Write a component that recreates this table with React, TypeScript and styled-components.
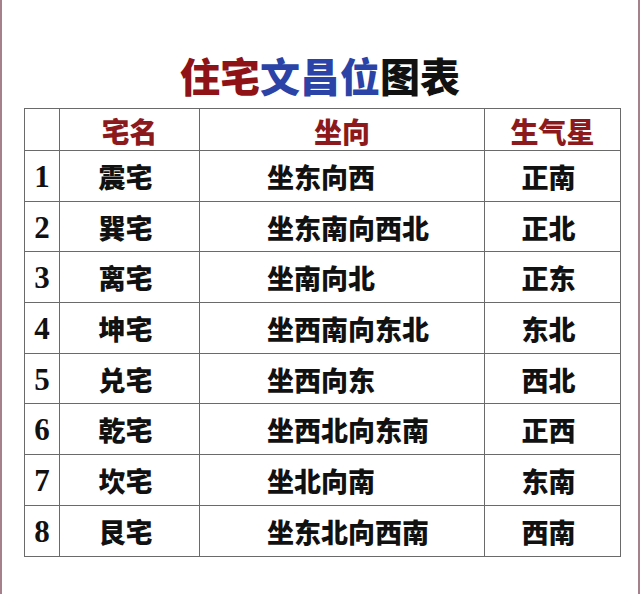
import React from 'react';
import styled, { createGlobalStyle } from 'styled-components';

interface House {
  nummer: number;
  namn: string;
  riktning: string;
  stjarna: string;
}

const houses: House[] = [
  { nummer: 1, namn: '震宅', riktning: '坐东向西', stjarna: '正南' },
  { nummer: 2, namn: '巽宅', riktning: '坐东南向西北', stjarna: '正北' },
  { nummer: 3, namn: '离宅', riktning: '坐南向北', stjarna: '正东' },
  { nummer: 4, namn: '坤宅', riktning: '坐西南向东北', stjarna: '东北' },
  { nummer: 5, namn: '兑宅', riktning: '坐西向东', stjarna: '西北' },
  { nummer: 6, namn: '乾宅', riktning: '坐西北向东南', stjarna: '正西' },
  { nummer: 7, namn: '坎宅', riktning: '坐北向南', stjarna: '东南' },
  { nummer: 8, namn: '艮宅', riktning: '坐东北向西南', stjarna: '西南' },
];

const App: React.FC = () => {
  return (
    <>
      <GlobalStyle />
      <StyledPage>
        <StyledTitle>
          <StyledTitlePart $color="#8e1216">住宅</StyledTitlePart>
          <StyledTitlePart $color="#2b43a6">文昌位</StyledTitlePart>
          <StyledTitlePart $color="#111">图表</StyledTitlePart>
        </StyledTitle>
        <StyledTable>
          <colgroup>
            <col style={{ width: 35 }} />
            <col style={{ width: 140 }} />
            <col style={{ width: 285 }} />
            <col style={{ width: 136 }} />
          </colgroup>
          <thead>
            <tr>
              <StyledHeadCell />
              <StyledHeadCell>宅名</StyledHeadCell>
              <StyledHeadCell>坐向</StyledHeadCell>
              <StyledHeadCell>生气星</StyledHeadCell>
            </tr>
          </thead>
          <tbody>
            {houses.map((house) => (
              <StyledRow key={house.nummer}>
                <StyledNumberCell>{house.nummer}</StyledNumberCell>
                <StyledCell>{house.namn}</StyledCell>
                <StyledCell $left>{house.riktning}</StyledCell>
                <StyledCell>{house.stjarna}</StyledCell>
              </StyledRow>
            ))}
          </tbody>
        </StyledTable>
      </StyledPage>
    </>
  );
};

export default App;

const GlobalStyle = createGlobalStyle`
  html, body {
    margin: 0;
    padding: 0;
    background: #fff;
  }
`;

const StyledPage = styled.div`
  box-sizing: border-box;
  width: 640px;
  height: 594px;
  padding-top: 55px;
  border-left: 2px solid #a4818b;
  border-right: 2px solid #a4818b;
  background: #fff;
`;

const StyledTitle = styled.h1`
  margin: 0 0 13px;
  text-align: center;
  font-family: 'Noto Sans CJK SC', sans-serif;
  font-size: 40px;
  line-height: 40px;
  font-weight: 900;
  letter-spacing: 0;
`;

const StyledTitlePart = styled.span<{ $color: string }>`
  color: ${(p) => p.$color};
`;

const StyledTable = styled.table`
  margin-left: 22px;
  width: 596px;
  border-collapse: collapse;
  table-layout: fixed;
  font-family: 'Noto Sans CJK SC', sans-serif;
  font-weight: 900;
`;

const StyledHeadCell = styled.th`
  height: 39px;
  padding: 2px 0 0;
  border: 1px solid #6a6a6a;
  color: #8c1a1c;
  font-size: 28px;
  line-height: 1;
  font-weight: 900;
  text-align: center;
  vertical-align: middle;
`;

const StyledRow = styled.tr`
  height: 50.7px;
`;

const StyledCell = styled.td<{ $left?: boolean }>`
  padding: 1px ${(p) => (p.$left ? '0 0 67px' : '8px 0 0')};
  border: 1px solid #6a6a6a;
  color: #111;
  font-size: 27px;
  line-height: 1;
  text-align: ${(p) => (p.$left ? 'left' : 'center')};
  vertical-align: middle;
  white-space: nowrap;
`;

const StyledNumberCell = styled.td`
  padding: 1px 0 0;
  border: 1px solid #6a6a6a;
  color: #111;
  font-family: 'Liberation Serif', serif;
  font-size: 31px;
  font-weight: 700;
  line-height: 1;
  text-align: center;
  vertical-align: middle;
`;
